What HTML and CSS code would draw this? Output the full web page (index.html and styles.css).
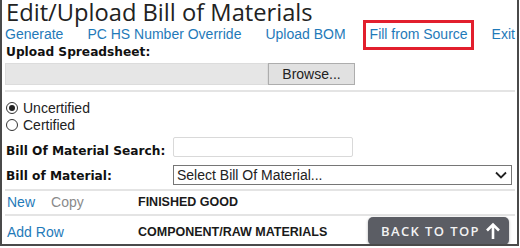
FILE: index.html
```html
<!DOCTYPE html>
<html lang="en">
<head>
    <meta charset="UTF-8">
    <title>Edit/Upload Bill of Materials</title>
    <link rel="stylesheet" href="styles.css">
</head>
<body>
    <div class="page">
        <h1>Edit/Upload Bill of Materials</h1>
        <nav class="actions">
            <a href="#">Generate</a>
            <a href="#">PC HS Number Override</a>
            <a href="#">Upload BOM</a>
            <a href="#" class="highlight">Fill from Source</a>
            <a href="#">Exit</a>
        </nav>

        <div class="label upload-label">Upload Spreadsheet:</div>
        <div class="file-row">
            <div class="file-field"></div>
            <div class="browse">Browse...</div>
        </div>

        <div class="rule"></div>

        <div class="radios">
            <div class="radio-row"><span class="radio checked"></span>Uncertified</div>
            <div class="radio-row"><span class="radio"></span>Certified</div>
        </div>

        <div class="field-row search-row">
            <span class="label">Bill Of Material Search:</span>
            <div class="text-input"></div>
        </div>
        <div class="field-row select-row">
            <span class="label">Bill of Material:</span>
            <div class="select">
                <span>Select Bill Of Material...</span>
                <svg width="12" height="8" viewBox="0 0 12 8"><path d="M1 1.5 L6 6.5 L11 1.5" fill="none" stroke="#222" stroke-width="1.8"/></svg>
            </div>
        </div>

        <div class="rule thin"></div>
        <div class="section-row first">
            <div class="row-links">
                <a href="#">New</a>
                <span class="muted">Copy</span>
            </div>
            <b>FINISHED GOOD</b>
        </div>
        <div class="rule thin"></div>
        <div class="section-row second">
            <div class="row-links">
                <a href="#">Add Row</a>
            </div>
            <b>COMPONENT/RAW MATERIALS</b>
        </div>

        <a href="#" class="back-top">BACK TO TOP
            <svg width="16" height="18" viewBox="0 0 16 18"><path d="M8 17 V2.5 M2 8.5 L8 2.5 L14 8.5" fill="none" stroke="#fff" stroke-width="2.6"/></svg>
        </a>
    </div>
</body>
</html>
```

FILE: styles.css
```css
body {
    margin: 0;
    background: #fff;
    font-family: "Liberation Sans", Arial, sans-serif;
    font-size: 14px;
    color: #222;
}
a {
    color: #1f7ab9;
    text-decoration: none;
}
.page {
    position: relative;
    box-sizing: border-box;
    width: 519px;
    height: 246px;
    padding-left: 3px;
    border: 2px solid #4a4a4a;
    border-top: none;
    overflow: hidden;
    white-space: nowrap;
}
h1 {
    margin: 0 0 0 1px;
    font-family: "Open Sans", sans-serif;
    font-weight: normal;
    font-size: 23.7px;
    line-height: 24px;
    color: #222;
}
.actions {
    display: flex;
    gap: 24px;
    margin-top: 2px;
    line-height: 16px;
}
.actions a {
    flex-shrink: 0;
}
.highlight {
    position: relative;
}
.highlight::after {
    content: '';
    position: absolute;
    left: -7px;
    right: -6px;
    top: -6px;
    bottom: -8px;
    border: 3px solid #e21f2d;
}
.label {
    font-family: "DejaVu Sans", Verdana, sans-serif;
    font-weight: bold;
    font-size: 12.2px;
    line-height: 15px;
    color: #111;
}
.upload-label {
    margin-top: 3px;
    padding-left: 1px;
}
.file-row {
    display: flex;
    margin-top: 3px;
    height: 22px;
}
.file-field {
    width: 263px;
    background: #e6e6e6;
    border: 1px solid #dcdcdc;
    box-sizing: border-box;
}
.browse {
    width: 87px;
    box-sizing: border-box;
    border: 1px solid #adadad;
    background: #e1e1e1;
    text-align: center;
    line-height: 20px;
}
.rule {
    height: 2px;
    width: 510px;
    margin-top: 5px;
    background: #e4e4e4;
}
.rule.thin {
    margin-top: 4px;
}
.radios {
    margin-top: 7px;
}
.radio-row {
    display: flex;
    align-items: center;
    height: 17px;
}
.radio {
    position: relative;
    box-sizing: border-box;
    width: 12px;
    height: 12px;
    margin: 0 5px 0 1px;
    border: 1px solid #333;
    border-radius: 50%;
}
.radio.checked::after {
    content: '';
    position: absolute;
    left: 2px;
    top: 2px;
    width: 6px;
    height: 6px;
    border-radius: 50%;
    background: #222;
}
.field-row {
    display: flex;
    align-items: flex-end;
}
.field-row .label {
    flex-shrink: 0;
    width: 167px;
    padding-left: 1px;
}
.search-row {
    margin-top: 4px;
}
.search-row .label {
    margin-bottom: -2px;
}
.text-input {
    width: 180px;
    height: 20px;
    box-sizing: border-box;
    border: 1px solid #d9d9d9;
    border-radius: 2px;
}
.select-row {
    margin-top: 8px;
}
.select-row .label {
    margin-bottom: 1px;
}
.select {
    display: flex;
    align-items: center;
    justify-content: space-between;
    width: 339px;
    height: 20px;
    box-sizing: border-box;
    padding: 0 4px 0 3px;
    border: 1px solid #767676;
    line-height: 18px;
}
.section-row {
    display: flex;
    align-items: center;
    line-height: 16px;
}
.section-row.first {
    margin-top: 3px;
}
.section-row.second {
    margin-top: 8px;
}
.row-links {
    display: flex;
    flex-shrink: 0;
    gap: 16px;
    width: 131px;
    padding-left: 2px;
}
.muted {
    color: #8a8a8a;
}
.section-row b {
    font-size: 12.5px;
    color: #1a1a1a;
}
.back-top {
    position: absolute;
    left: 366px;
    top: 217px;
    display: flex;
    align-items: center;
    gap: 5px;
    box-sizing: border-box;
    width: 141px;
    height: 28px;
    padding-left: 13px;
    border-radius: 5px;
    background: #5b5d64;
    color: #f2f2f2;
    font-family: "Open Sans", sans-serif;
    font-size: 13px;
    font-weight: 600;
    letter-spacing: 1.4px;
    box-shadow: 0 1px 3px rgba(0, 0, 0, 0.3);
}
```
